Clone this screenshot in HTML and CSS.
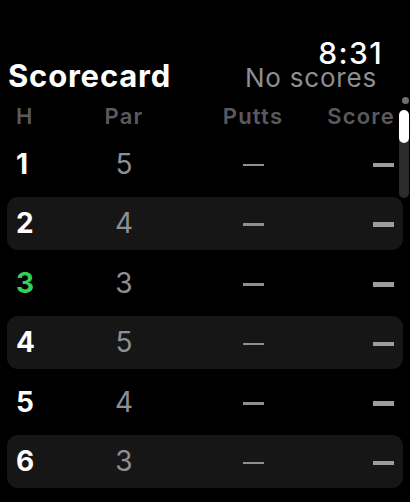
FILE: index.html
```html
<!DOCTYPE html>
<html>
<head>
    <meta charset="UTF-8">
    <title>Scorecard</title>
    <link rel="stylesheet" href="styles.css">
</head>
<body>
    <div class="screen">
        <div class="clock">8:31</div>
        <div class="title-bar">
            <div class="title">Scorecard</div>
            <div class="summary">No scores</div>
        </div>

        <div class="row head">
            <div class="hole">H</div>
            <div class="par">Par</div>
            <div class="putts">Putts</div>
            <div class="score">Score</div>
        </div>

        <div class="rows">
            <div class="row">
                <div class="hole">1</div>
                <div class="par">5</div>
                <div class="putts"><span class="dash"></span></div>
                <div class="score"><span class="dash bold"></span></div>
            </div>
            <div class="row band">
                <div class="hole">2</div>
                <div class="par">4</div>
                <div class="putts"><span class="dash"></span></div>
                <div class="score"><span class="dash bold"></span></div>
            </div>
            <div class="row">
                <div class="hole current">3</div>
                <div class="par">3</div>
                <div class="putts"><span class="dash"></span></div>
                <div class="score"><span class="dash bold"></span></div>
            </div>
            <div class="row band">
                <div class="hole">4</div>
                <div class="par">5</div>
                <div class="putts"><span class="dash"></span></div>
                <div class="score"><span class="dash bold"></span></div>
            </div>
            <div class="row">
                <div class="hole">5</div>
                <div class="par">4</div>
                <div class="putts"><span class="dash"></span></div>
                <div class="score"><span class="dash bold"></span></div>
            </div>
            <div class="row band">
                <div class="hole">6</div>
                <div class="par">3</div>
                <div class="putts"><span class="dash"></span></div>
                <div class="score"><span class="dash bold"></span></div>
            </div>
        </div>

        <div class="scroll-dot"></div>
        <div class="scroll-track">
            <div class="scroll-thumb"></div>
        </div>
    </div>
</body>
</html>
```

FILE: styles.css
```css
html, body {
    margin: 0;
    background: #000;
}

body {
    font-family: Inter, "Noto Sans", sans-serif;
    color: #fff;
    overflow: hidden;
}

.screen {
    position: relative;
    width: 410px;
    height: 502px;
    overflow: hidden;
}

.clock {
    text-align: right;
    padding: 41px 27px 0 0;
    font-size: 30px;
    line-height: 24px;
    font-weight: 500;
    letter-spacing: 1.4px;
}

.title-bar {
    display: flex;
    justify-content: space-between;
    align-items: baseline;
    padding: 0 33px 0 8px;
    margin-top: -1px;
}

.title {
    font-size: 31px;
    font-weight: 700;
    line-height: 24px;
    letter-spacing: 0.8px;
}

.summary {
    font-size: 26px;
    color: #8e8e93;
    line-height: 24px;
    letter-spacing: 0.8px;
}

.row {
    display: grid;
    grid-template-columns: 60px 96px 162px minmax(0, 1fr);
    align-items: center;
    height: 53px;
    margin: 0 7px;
    padding: 0 9px;
    border-radius: 11px;
}

.row.head {
    height: 30px;
    margin-top: 11px;
    margin-bottom: 6px;
    font-size: 22px;
    font-weight: 600;
    color: #5a5a5e;
    letter-spacing: 1.2px;
}

.rows {
    display: flex;
    flex-direction: column;
    gap: 6.6px;
}

.band {
    background: #161616;
}

.hole {
    font-size: 28px;
    font-weight: 700;
}

.head .hole {
    font-size: 22px;
    font-weight: 600;
}

.hole.current {
    color: #30d158;
}

.par {
    text-align: center;
    font-size: 28px;
    color: #8e8e93;
}

.head .par {
    font-size: 22px;
    color: #5a5a5e;
}

.putts {
    text-align: center;
}

.score {
    justify-self: end;
    white-space: nowrap;
}

.head .score {
    margin-right: -1px;
}

.dash {
    display: inline-block;
    width: 21px;
    height: 2.5px;
    background: #8e8e93;
    vertical-align: middle;
}

.dash.bold {
    height: 4.5px;
    background: #9c9ca1;
}

.scroll-dot {
    position: absolute;
    left: 402px;
    top: 97px;
    width: 7px;
    height: 7px;
    border-radius: 50%;
    background: #6e6e73;
}

.scroll-track {
    position: absolute;
    left: 399px;
    top: 110px;
    width: 10px;
    height: 88px;
    border-radius: 5px;
    background: #2c2c2e;
}

.scroll-thumb {
    height: 33px;
    border-radius: 5px;
    background: #fff;
}
```
